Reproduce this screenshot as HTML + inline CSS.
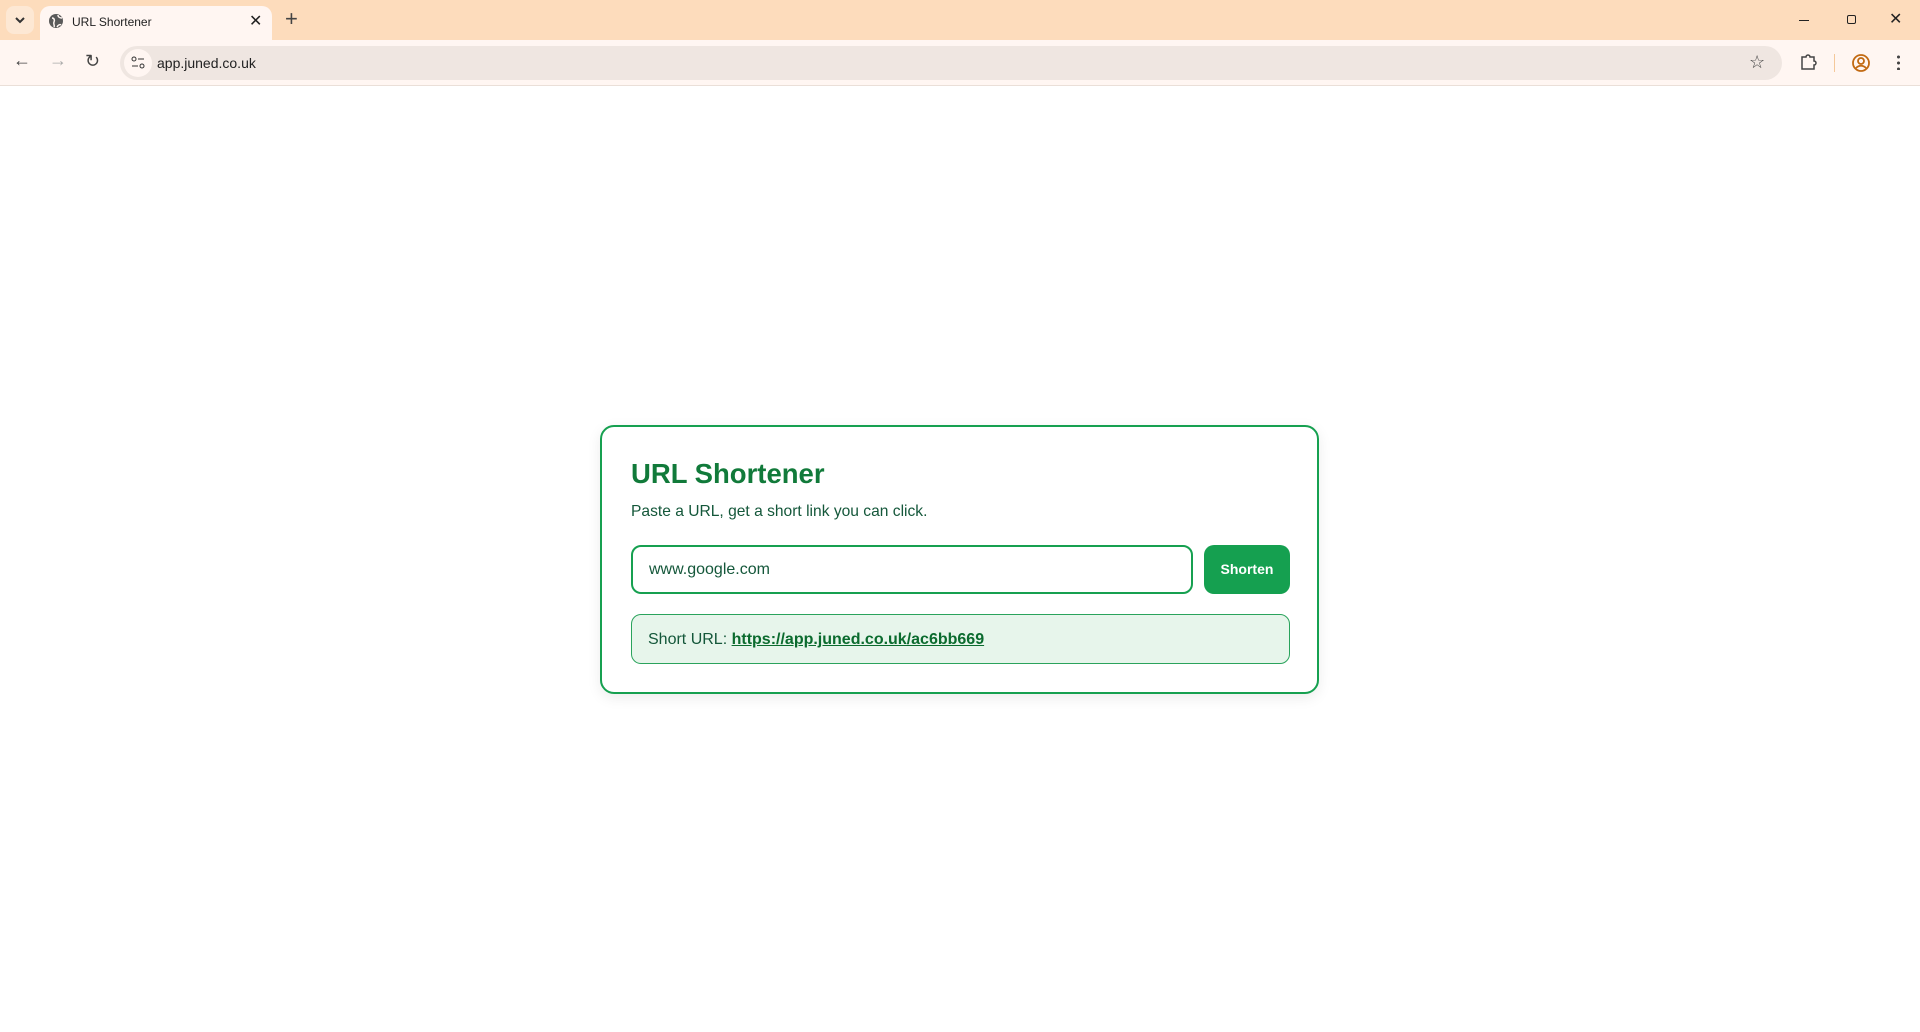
<!DOCTYPE html>
<html><head><meta charset="utf-8"><style>
*{box-sizing:border-box;margin:0;padding:0}
body{width:1920px;height:1032px;background:#fff;font-family:"Liberation Sans",sans-serif;position:relative;overflow:hidden}
.tabbar{position:absolute;left:0;top:0;width:1920px;height:40px;background:#fddcbc}
.tab{position:absolute;left:40px;top:6px;width:232px;height:34px;background:#fff6f2;border-radius:10px 10px 0 0}
.toolbar{position:absolute;left:0;top:40px;width:1920px;height:46px;background:#fff6f2;border-bottom:1px solid #eadfd8}
.omni{position:absolute;left:120px;top:6px;width:1662px;height:34px;background:#efe6e1;border-radius:17px}
.card{position:absolute;left:600px;top:425px;width:719px;height:269px;border:2px solid #16a050;border-radius:14px;box-shadow:0 4px 14px rgba(0,0,0,.08)}
h1{position:absolute;left:29px;top:31px;font-size:27.5px;color:#117a3a;font-weight:bold}
.sub{position:absolute;left:29px;top:76px;font-size:15.6px;color:#14573a}
.inp{position:absolute;left:29px;top:118px;width:562px;height:49px;border:2px solid #16a050;border-radius:10px;font-size:16px;color:#14573a;padding:14px 16px}
.btn{position:absolute;left:602px;top:118px;width:86px;height:49px;background:#15a050;border-radius:10px;color:#fff;font-weight:bold;font-size:14px;text-align:center;line-height:49px}
.res{position:absolute;left:29px;top:187px;width:659px;height:50px;background:#e7f5eb;border:1px solid #2aa35c;border-radius:10px;font-size:16px;color:#14573a;padding:16px 16px}
.res a{color:#0b6b2e;font-weight:bold;text-decoration:underline}
</style></head><body>
<div class="tabbar">
 <div style="position:absolute;left:6px;top:6px;width:28px;height:28px;background:#fde8d4;border-radius:8px"></div>
 <svg style="position:absolute;left:13px;top:14px" width="14" height="12"><path d="M3 4l4 4 4-4" stroke="#333" stroke-width="2" fill="none"/></svg>
 <div class="tab">
  <svg style="position:absolute;left:8px;top:7px" width="16" height="16"><circle cx="8" cy="8" r="7" fill="#5a5a5a"/><path d="M4 5c2 0 3 2 2 4s1 3 0 5M10 2c0 2 2 3 4 3M9 14c1-2 3-3 4-2" stroke="#fff6f2" stroke-width="1.5" fill="none"/></svg>
  <span style="position:absolute;left:32px;top:9px;font-size:12px;color:#222">URL Shortener</span>
  <span style="position:absolute;left:209px;top:5px;font-size:16px;color:#222">✕</span>
 </div>
 <span style="position:absolute;left:285px;top:6px;font-size:22px;color:#444">+</span>
 <div style="position:absolute;left:1799px;top:20px;width:10px;height:1px;background:#222"></div>
 <div style="position:absolute;left:1847px;top:15px;width:9px;height:9px;border:1px solid #222;border-radius:2px"></div>
 <span style="position:absolute;left:1889px;top:9px;font-size:16px;color:#222">✕</span>
</div>
<div class="toolbar">
 <span style="position:absolute;left:13px;top:10px;font-size:18px;color:#444">←</span>
 <span style="position:absolute;left:49px;top:10px;font-size:18px;color:#aaa">→</span>
 <span style="position:absolute;left:85px;top:11px;font-size:18px;color:#444">↻</span>
 <div class="omni">
  <div style="position:absolute;left:4px;top:3px;width:28px;height:28px;background:#fff6f2;border-radius:14px"></div>
  <svg style="position:absolute;left:11px;top:10px" width="14" height="14"><circle cx="3" cy="3" r="2" fill="none" stroke="#333"/><path d="M7 3h6M1 10h6" stroke="#333"/><circle cx="11" cy="10" r="2" fill="none" stroke="#333"/></svg>
  <span style="position:absolute;left:37px;top:9px;font-size:14px;color:#222">app.juned.co.uk</span>
  <span style="position:absolute;left:1629px;top:6px;font-size:18px;color:#444">☆</span>
 </div>
 <svg style="position:absolute;left:1800px;top:13px" width="18" height="18"><path d="M2 4h4a2 2 0 014 0h4v4a2 2 0 010 4v4H2z" fill="none" stroke="#444" stroke-width="1.5"/></svg>
 <div style="position:absolute;left:1834px;top:14px;width:1px;height:18px;background:#f4c89a"></div>
 <svg style="position:absolute;left:1851px;top:13px" width="20" height="20"><circle cx="10" cy="10" r="8" fill="none" stroke="#c26a12" stroke-width="1.8"/><circle cx="10" cy="8" r="3" fill="none" stroke="#c26a12" stroke-width="1.8"/><path d="M5 15c3-3 7-3 10 0" stroke="#c26a12" stroke-width="1.8" fill="none"/></svg>
 <div style="position:absolute;left:1897px;top:14px;width:3px;height:16px;background:radial-gradient(circle,#444 1.4px,transparent 1.6px) 0 0/3px 6px"></div>
</div>
<div class="card">
 <h1>URL Shortener</h1>
 <div class="sub">Paste a URL, get a short link you can click.</div>
 <div class="inp">www.google.com</div>
 <div class="btn">Shorten</div>
 <div class="res">Short URL: <a>https://app.juned.co.uk/ac6bb669</a></div>
</div>
</body></html>
